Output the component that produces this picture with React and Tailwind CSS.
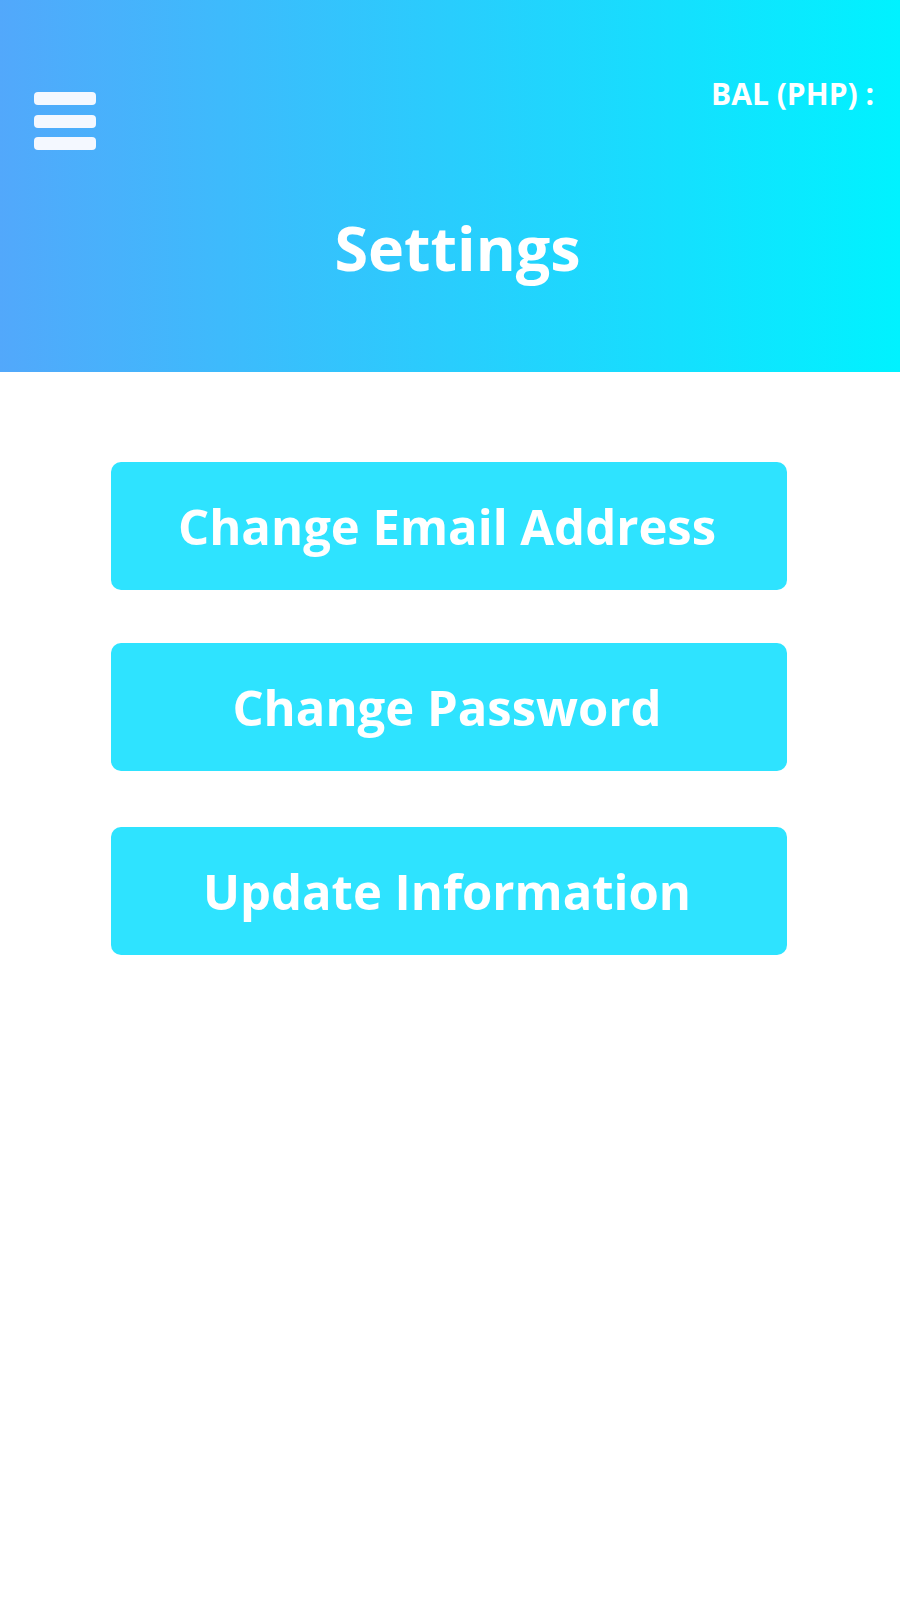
import React from 'react';

const buttons = [
  { label: 'Change Email Address', gap: 'mb-[53px]' },
  { label: 'Change Password', gap: 'mb-[56px]' },
  { label: 'Update Information', gap: '' },
];

function MenuIcon() {
  return (
    <div className="mt-[13px] ml-[34px] flex flex-col gap-[9.5px]">
      <span className="block h-[13px] w-[62px] rounded-[4px] bg-[#f4f8ff]" />
      <span className="block h-[13px] w-[62px] rounded-[4px] bg-[#f4f8ff]" />
      <span className="block h-[13px] w-[62px] rounded-[4px] bg-[#f4f8ff]" />
    </div>
  );
}

export default function App() {
  return (
    <div className="min-h-[1600px] w-[900px] bg-white font-['Open_Sans',sans-serif]">
      {/* header */}
      <header className="h-[372px] bg-linear-to-r/srgb from-[#52a8fb] to-[#00f2ff] pt-[79px]">
        <div className="flex items-start justify-between">
          <MenuIcon />
          <div className="mr-[26px] text-[30px] leading-[30px] font-bold text-white">
            BAL (PHP) :
          </div>
        </div>
        <h1 className="mt-[67px] pl-[15px] text-center text-[61px] leading-[62px] font-bold text-white">
          Settings
        </h1>
      </header>

      {/* options */}
      <main className="pt-[90px]">
        {buttons.map((b) => (
          <button
            key={b.label}
            className={`ml-[111px] flex h-[128px] w-[676px] items-center justify-center rounded-[10px] bg-[#2ee3ff] pr-[4px] text-[49px] leading-[48px] font-bold text-white ${b.gap}`}
          >
            {b.label}
          </button>
        ))}
      </main>
    </div>
  );
}
